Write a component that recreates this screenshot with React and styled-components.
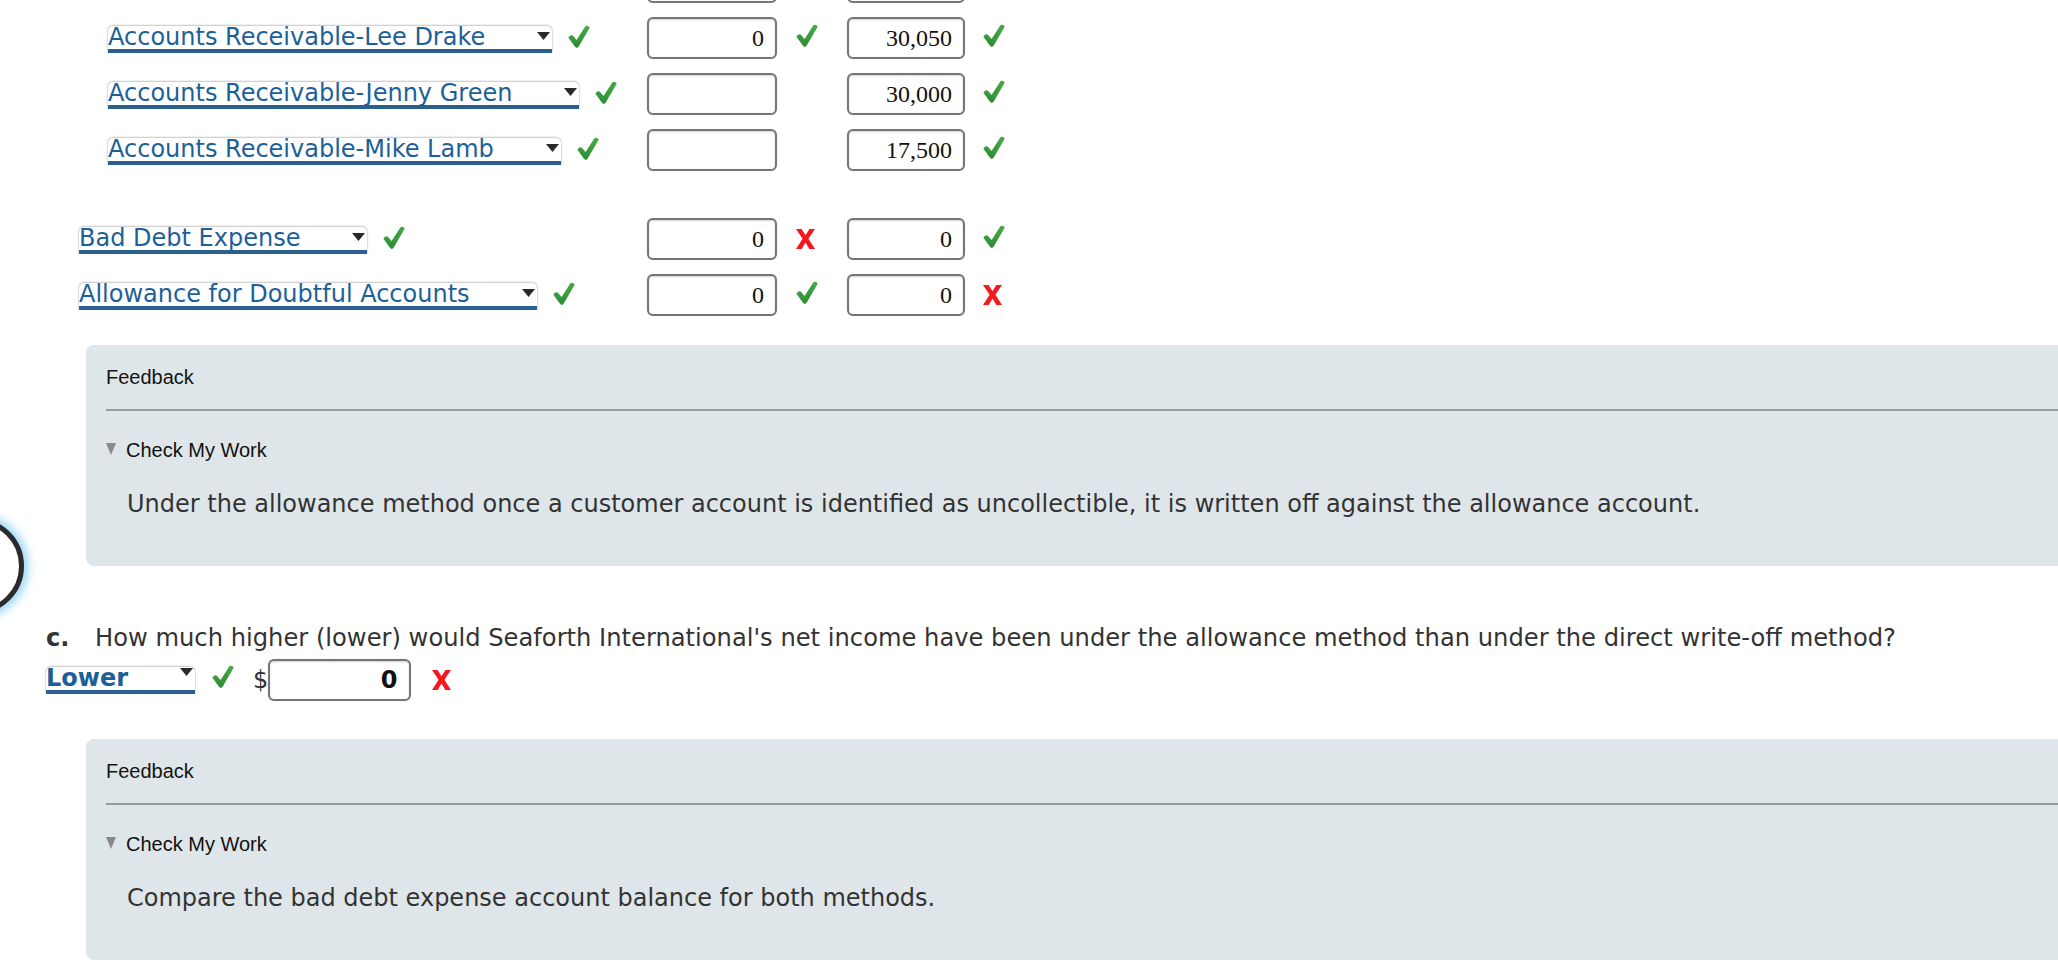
import React from "react";
import styled, { createGlobalStyle } from "styled-components";

const GlobalStyle = createGlobalStyle`
  html, body { margin: 0; padding: 0; background: #fff; overflow: hidden; }
  body { font-family: "DejaVu Sans", Verdana, sans-serif; }
`;

const Page = styled.div`
  position: relative;
  width: 2058px;
  height: 978px;
  overflow: hidden;
`;

const Journal = styled.div`
  margin-top: -46px;
  display: flex;
  flex-direction: column;
`;

const Row = styled.div`
  display: flex;
  align-items: center;
  height: 56px;
  margin-top: ${(p) => p.$gapTop || 0}px;
`;

const AccountCell = styled.div`
  width: 647px;
  flex: none;
  box-sizing: border-box;
  padding-left: ${(p) => p.$indent}px;
  padding-top: 2px;
  display: flex;
  align-items: center;
  gap: 16px;
`;

const AmountCell = styled.div`
  width: ${(p) => p.$w}px;
  flex: none;
  display: flex;
  align-items: center;
  gap: ${(p) => p.$gap}px;
`;

const SelectBox = styled.div`
  display: inline-flex;
  align-items: flex-start;
  flex: none;
  height: 23px;
  background: #fff;
  border-bottom: 4px solid #2b5f8c;
  border-radius: 5px 5px 0 0;
  box-shadow: 0 -1px 2px rgba(0, 0, 0, 0.22), -1px 0 1px rgba(0, 0, 0, 0.08),
    1px 0 1px rgba(0, 0, 0, 0.08);
  padding-right: 2px;
  font-family: "DejaVu Sans", Verdana, sans-serif;
  font-size: 24px;
  line-height: 23px;
  font-weight: ${(p) => (p.$bold ? 700 : 400)};
  color: #1d5f99;
`;

const SelectText = styled.span`
  white-space: nowrap;
`;

const Arrow = styled.svg`
  flex: none;
  margin-left: 52px;
  margin-top: ${(p) => p.$top || 6}px;
`;

const AmountInput = styled.input`
  box-sizing: border-box;
  width: ${(p) => p.$w}px;
  height: 42px;
  flex: none;
  margin: 0;
  border: 2px solid #767676;
  border-radius: 6px;
  box-shadow: inset 0 1px 2px rgba(0, 0, 0, 0.18), 0 0 1px rgba(0, 0, 0, 0.2);
  background: #fff;
  padding: 0 ${(p) => p.$pr || 11}px 0 6px;
  text-align: right;
  font-family: ${(p) =>
    p.$sans ? `"DejaVu Sans", Verdana, sans-serif` : `"Liberation Serif", "Times New Roman", serif`};
  font-size: 24px;
  font-weight: ${(p) => (p.$bold ? 700 : 400)};
  color: #111;
  outline: none;
`;

const IconSvg = styled.svg`
  flex: none;
  display: block;
  margin-bottom: ${(p) => p.$lift || 0}px;
`;

const FeedbackBox = styled.div`
  box-sizing: border-box;
  height: 221px;
  margin: ${(p) => p.$top}px -80px 0 86px;
  background: #dfe6e9;
  border-radius: 8px;
  padding: 21px 0 0 20px;
`;

const FeedbackTitle = styled.div`
  font-family: "Liberation Sans", Arial, Helvetica, sans-serif;
  font-size: 20px;
  line-height: 23px;
  color: #151515;
`;

const Rule = styled.div`
  height: 2px;
  margin-top: 20px;
  background: #959c9f;
`;

const Disclosure = styled.div`
  display: flex;
  align-items: center;
  gap: 10px;
  margin-top: 28px;
  font-family: "Liberation Sans", Arial, Helvetica, sans-serif;
  font-size: 20px;
  line-height: 23px;
  color: #111;
`;

const Triangle = styled.svg`
  flex: none;
  margin-top: -3px;
  filter: blur(0.5px);
`;

const FeedbackBody = styled.p`
  margin: 28px 0 0 21px;
  font-family: "DejaVu Sans", Verdana, sans-serif;
  font-size: 24px;
  line-height: 28px;
  color: #333;
  white-space: nowrap;
`;

const PartC = styled.div`
  margin-top: 58px;
  padding-left: 46px;
`;

const Question = styled.div`
  display: flex;
  font-family: "DejaVu Sans", Verdana, sans-serif;
  font-size: 24.2px;
  line-height: 28px;
  color: #333;
  white-space: nowrap;
`;

const PartLabel = styled.span`
  width: 49px;
  flex: none;
  font-weight: 700;
`;

const AnswerRow = styled.div`
  display: flex;
  align-items: center;
  height: 42px;
  margin-top: 7px;
`;

const Dollar = styled.span`
  margin-left: 19px;
  font-family: "DejaVu Sans", Verdana, sans-serif;
  font-size: 24px;
  color: #333;
`;

const Spacer = styled.span`
  display: inline-block;
  flex: none;
  width: ${(p) => p.$w}px;
`;

const FloatingRing = styled.div`
  position: absolute;
  left: -72px;
  top: 518px;
  width: 86px;
  height: 86px;
  border: 5px solid #2b2b2b;
  border-radius: 50%;
  background: #fff;
  box-shadow: 0 0 10px 4px rgba(130, 205, 248, 0.85);
`;

const Check = ({ lift = 4 }) => (
  <IconSvg width="22" height="24" viewBox="0 0 22 24" $lift={lift}>
    <defs>
      <linearGradient id="chk" x1="0" y1="0" x2="0" y2="1">
        <stop offset="0" stopColor="#46aa49" />
        <stop offset="1" stopColor="#2e8c34" />
      </linearGradient>
    </defs>
    <path
      d="M0.4 12.8 Q1.8 10 4.6 10.4 L8.6 15 L17.4 1.2 Q19.8 -0.2 21.8 2.4 L10.6 21.8 Q8.8 24 7 21.8 Z"
      fill="url(#chk)"
    />
  </IconSvg>
);

const Cross = () => (
  <IconSvg width="19" height="20" viewBox="0 0 19 20" $lift={1}>
    <polygon
      points="0,0 5.6,0 9.5,6.2 13.4,0 19,0 12.4,9.8 19,20 13.3,20 9.5,13.6 5.7,20 0,20 6.6,9.8"
      fill="#f5191e"
    />
  </IconSvg>
);

const DropArrow = ({ top }) => (
  <Arrow width="13" height="8" viewBox="0 0 13 8" $top={top}>
    <polygon points="0,0 13,0 6.5,8" fill="#2a2a2a" />
  </Arrow>
);

const Select = ({ children, bold, arrowTop }) => (
  <SelectBox $bold={bold}>
    <SelectText>{children}</SelectText>
    <DropArrow top={arrowTop} />
  </SelectBox>
);

const Mark = ({ kind }) =>
  kind === "ok" ? <Check /> : kind === "bad" ? <Cross /> : <Spacer $w={22} />;

const rows = [
  { account: null, indent: 79, debit: "", dMark: null, credit: "", cMark: null },
  { account: "Accounts Receivable-Lee Drake", indent: 108, debit: "0", dMark: "ok", credit: "30,050", cMark: "ok" },
  { account: "Accounts Receivable-Jenny Green", indent: 108, debit: "", dMark: null, credit: "30,000", cMark: "ok" },
  { account: "Accounts Receivable-Mike Lamb", indent: 108, debit: "", dMark: null, credit: "17,500", cMark: "ok" },
  { account: "Bad Debt Expense", indent: 79, debit: "0", dMark: "bad", credit: "0", cMark: "ok", gap: 33 },
  { account: "Allowance for Doubtful Accounts", indent: 79, debit: "0", dMark: "ok", credit: "0", cMark: "bad" },
];

const Feedback = ({ top, children }) => (
  <FeedbackBox $top={top}>
    <FeedbackTitle>Feedback</FeedbackTitle>
    <Rule />
    <Disclosure>
      <Triangle width="10" height="12" viewBox="0 0 10 12">
        <polygon points="0,0 10,0 5,12" fill="#8a8a8a" />
      </Triangle>
      Check My Work
    </Disclosure>
    <FeedbackBody>{children}</FeedbackBody>
  </FeedbackBox>
);

export default function App() {
  return (
    <Page>
      <GlobalStyle />
      <Journal>
        {rows.map((r, i) => (
          <Row key={i} $gapTop={r.gap}>
            <AccountCell $indent={r.indent}>
              {r.account && (
                <>
                  <Select>{r.account}</Select>
                  <Check />
                </>
              )}
            </AccountCell>
            <AmountCell $w={200} $gap={19}>
              <AmountInput $w={130} readOnly value={r.debit} />
              <Mark kind={r.dMark} />
            </AmountCell>
            <AmountCell $w={200} $gap={18}>
              <AmountInput $w={118} readOnly value={r.credit} />
              <Mark kind={r.cMark} />
            </AmountCell>
          </Row>
        ))}
      </Journal>

      <Feedback top={22}>
        Under the allowance method once a customer account is identified as uncollectible, it is
        written off against the allowance account.
      </Feedback>

      <PartC>
        <Question>
          <PartLabel>c.</PartLabel>
          How much higher (lower) would Seaforth International's net income have been under the
          allowance method than under the direct write-off method?
        </Question>
        <AnswerRow>
          <Select bold arrowTop={1}>Lower</Select>
          <Spacer $w={17} />
          <Check lift={6} />
          <Dollar>$</Dollar>
          <AmountInput $w={143} $sans $bold $pr={12} readOnly value="0" />
          <Spacer $w={21} />
          <Cross />
        </AnswerRow>
      </PartC>

      <Feedback top={38}>Compare the bad debt expense account balance for both methods.</Feedback>

      <FloatingRing />
    </Page>
  );
}
